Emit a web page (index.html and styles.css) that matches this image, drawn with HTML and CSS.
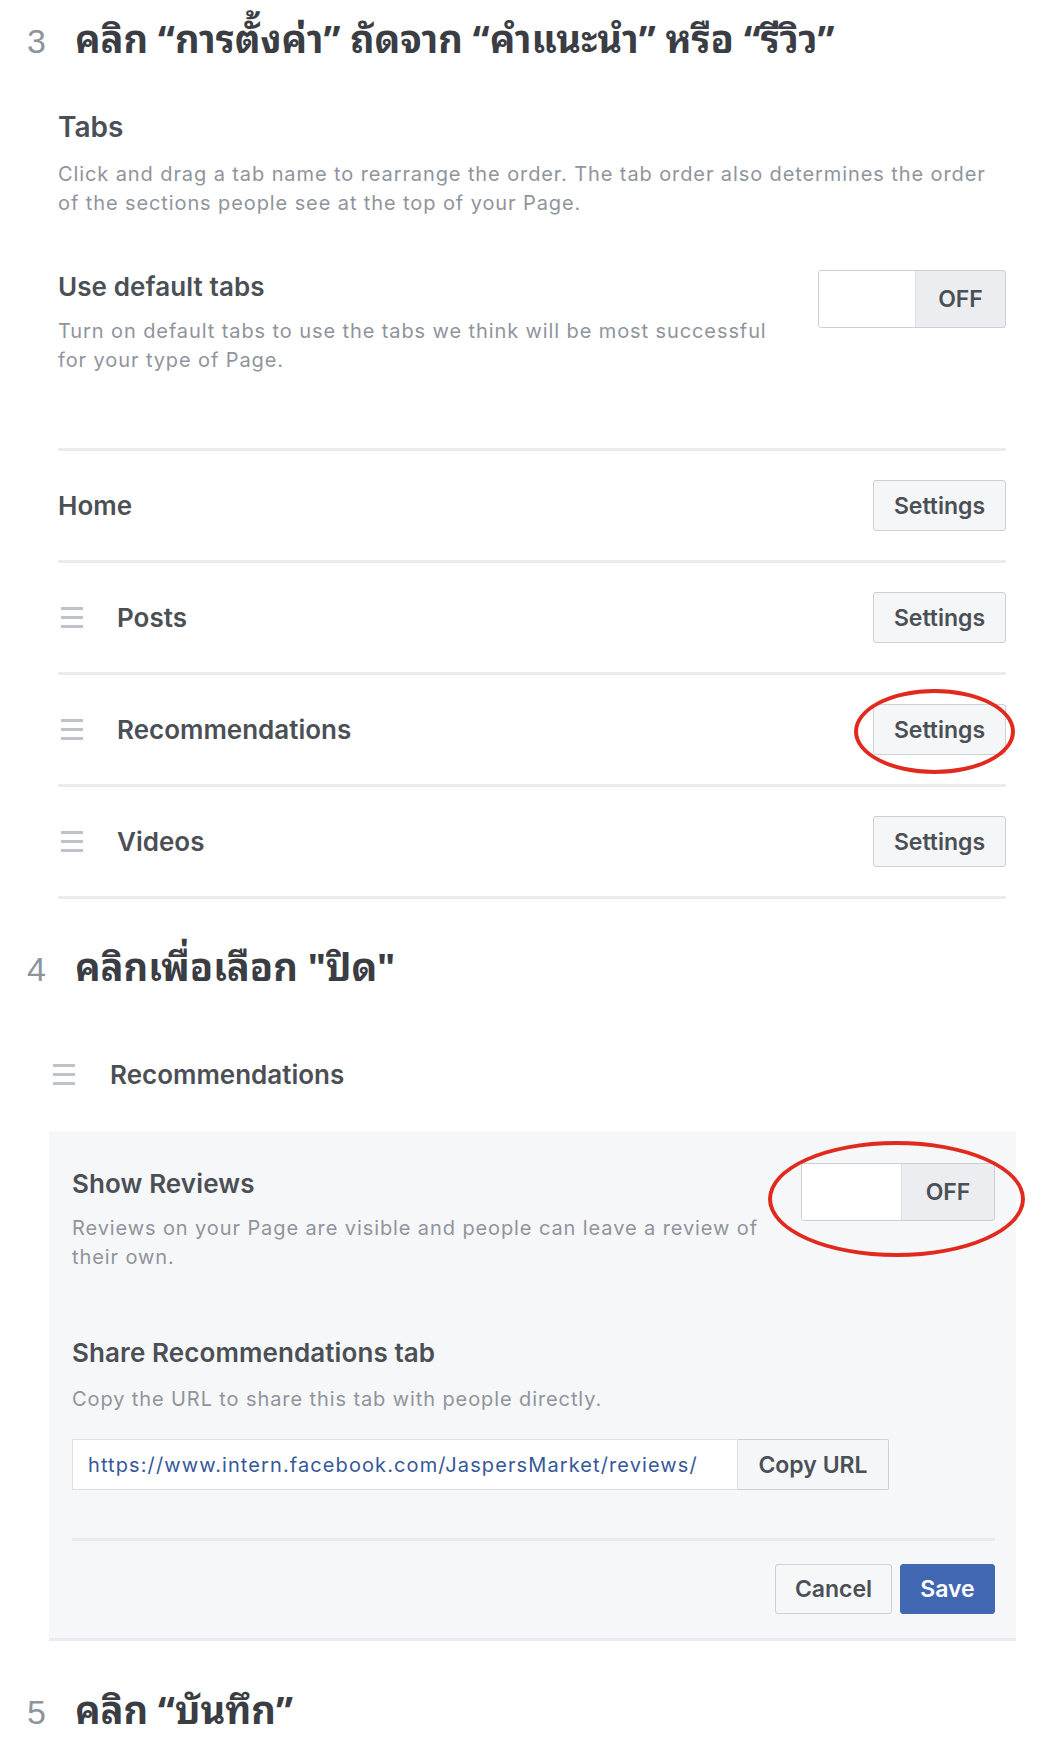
FILE: index.html
```html
<!DOCTYPE html>
<html lang="th">
<head>
<meta charset="utf-8">
<title>Recommendations settings</title>
<link rel="stylesheet" href="styles.css">
</head>
<body>
<main class="page">
  <h2 class="step step-first"><span class="step-num">3</span><span class="step-text">คลิก “การตั้งค่า” ถัดจาก “คำแนะนำ” หรือ “รีวิว”</span></h2>

  <section class="tabs">
    <h3 class="tabs-title">Tabs</h3>
    <p class="desc">Click and drag a tab name to rearrange the order. The tab order also determines the order of the sections people see at the top of your Page.</p>

    <div class="setting">
      <div class="setting-text">
        <h4 class="label">Use default tabs</h4>
        <p class="desc">Turn on default tabs to use the tabs we think will be most successful for your type of Page.</p>
      </div>
      <div class="toggle toggle-tabs"><span class="toggle-knob"></span><span class="toggle-off">OFF</span></div>
    </div>

    <ul class="tab-list">
      <li class="tab-row"><span class="tab-name">Home</span><button class="btn">Settings</button></li>
      <li class="tab-row"><span class="drag"><i></i><i></i><i></i></span><span class="tab-name">Posts</span><button class="btn">Settings</button></li>
      <li class="tab-row"><span class="drag"><i></i><i></i><i></i></span><span class="tab-name">Recommendations</span><span class="mark mark-btn"><button class="btn">Settings</button></span></li>
      <li class="tab-row"><span class="drag"><i></i><i></i><i></i></span><span class="tab-name">Videos</span><button class="btn">Settings</button></li>
    </ul>
  </section>

  <h2 class="step step-second"><span class="step-num">4</span><span class="step-text">คลิกเพื่อเลือก "ปิด"</span></h2>

  <div class="rec-head"><span class="drag"><i></i><i></i><i></i></span><span class="tab-name">Recommendations</span></div>

  <section class="panel">
    <div class="setting panel-setting">
      <div class="setting-text">
        <h4 class="label">Show Reviews</h4>
        <p class="desc">Reviews on your Page are visible and people can leave a review of their own.</p>
      </div>
      <span class="mark mark-toggle"><span class="toggle toggle-reviews"><span class="toggle-knob"></span><span class="toggle-off">OFF</span></span></span>
    </div>

    <h4 class="label share-label">Share Recommendations tab</h4>
    <p class="desc">Copy the URL to share this tab with people directly.</p>
    <div class="url-group">
      <span class="url-field">https://www.intern.facebook.com/JaspersMarket/reviews/</span>
      <button class="btn btn-copy">Copy URL</button>
    </div>

    <div class="panel-footer">
      <button class="btn btn-cancel">Cancel</button>
      <button class="btn btn-save">Save</button>
    </div>
  </section>

  <h2 class="step step-third"><span class="step-num">5</span><span class="step-text">คลิก “บันทึก”</span></h2>
</main>
</body>
</html>
```

FILE: styles.css
```css
html, body {
  margin: 0;
  padding: 0;
  background: #ffffff;
}

.page {
  width: 1062px;
  font-family: Inter, "Liberation Sans", Arial, sans-serif;
  color: #4b4f56;
}

/* Step headings */
.step {
  display: flex;
  align-items: baseline;
  margin: 0;
  padding-left: 27px;
  font-weight: 700;
  line-height: 48px;
}

.step-num {
  width: 48px;
  font-family: "Liberation Sans", Arial, sans-serif;
  font-weight: 400;
  font-size: 34px;
  color: #8d949e;
}

.step-text {
  font-family: "Noto Sans Thai Looped", "Loma", "Garuda", "Noto Sans Thai", "Noto Sans Thai UI", sans-serif;
  font-size: 38px;
  color: #3a3d43;
}

.step-first { padding-top: 12px; }
.step-second { margin-top: 41px; }
.step-third { margin-top: 42px; }

/* Tabs settings block */
.tabs {
  margin-left: 58px;
  width: 948px;
}

.tabs-title {
  margin: 46px 0 0;
  font-size: 28px;
  line-height: 32px;
  font-weight: 600;
  color: #4b4f56;
}

.desc {
  margin: 0;
  font-size: 20px;
  line-height: 29px;
  letter-spacing: 0.9px;
  color: #90949c;
}

.tabs-title + .desc { margin-top: 17px; }

.setting {
  display: flex;
  justify-content: space-between;
  align-items: flex-start;
  margin-top: 54px;
}

.setting-text { width: 712px; }

.label {
  margin: 0 0 15px;
  font-size: 26px;
  line-height: 30px;
  letter-spacing: 0.1px;
  font-weight: 600;
  color: #4b4f56;
}

.toggle {
  display: flex;
  width: 188px;
  height: 58px;
  box-sizing: border-box;
  border: 1px solid #ccd0d5;
  border-radius: 3px;
  overflow: hidden;
  background: #ebedf0;
}

.toggle-tabs { margin-top: -2px; }

.toggle-knob {
  width: 96px;
  background: #ffffff;
  border-right: 1px solid #dddfe2;
}

.toggle-off {
  flex: 1;
  display: flex;
  align-items: center;
  justify-content: center;
  font-size: 23px;
  font-weight: 600;
  color: #4b4f56;
}

/* Tab list */
.tab-list {
  list-style: none;
  margin: 73px 0 0;
  padding: 0;
  border-top: 3px solid #e9ebee;
}

.tab-row {
  display: flex;
  align-items: center;
  height: 109px;
  border-bottom: 3px solid #e9ebee;
}

.tab-name {
  flex: 1;
  font-size: 26px;
  font-weight: 600;
  color: #4b4f56;
}

.drag {
  display: flex;
  flex-direction: column;
  justify-content: space-between;
  width: 22px;
  height: 21px;
  margin: 0 34px 0 3px;
}

.drag i {
  display: block;
  height: 3px;
  background: #bec3c9;
}

.btn {
  box-sizing: border-box;
  height: 51px;
  padding: 0;
  border: 1px solid #ced0d4;
  border-radius: 3px;
  background: #f5f6f7;
  font-family: Inter, "Liberation Sans", Arial, sans-serif;
  font-size: 23px;
  font-weight: 600;
  color: #4b4f56;
}

.tab-row .btn { width: 133px; }

/* Red annotation rings */
.mark {
  position: relative;
  display: inline-block;
}

.mark::after {
  content: "";
  position: absolute;
  border: 4px solid #e2291d;
  border-radius: 50%;
  pointer-events: none;
}

.mark-btn::after {
  left: -19px;
  top: -15px;
  width: 153px;
  height: 77px;
}

.mark-toggle::after {
  left: -33px;
  top: -28px;
  width: 249px;
  height: 108px;
}

/* Recommendations detail */
.rec-head {
  display: flex;
  align-items: center;
  margin: 66px 0 0 50px;
  height: 30px;
}

.rec-head .drag { margin-right: 35px; }

.panel {
  margin: 42px 0 0 49px;
  width: 967px;
  box-sizing: border-box;
  padding: 38px 21px 24px 23px;
  background: #f6f7f9;
  border-bottom: 3px solid #e9ebee;
}

.panel-setting { margin-top: 0; }

.panel-setting .setting-text { width: 700px; }

.toggle-reviews { width: 194px; margin-top: -6px; }
.toggle-reviews .toggle-knob { width: 99px; }

.share-label { margin-top: 66px; margin-bottom: 17px; }

.url-group {
  display: flex;
  margin-top: 25px;
}

.url-field {
  box-sizing: border-box;
  width: 666px;
  height: 51px;
  display: flex;
  align-items: center;
  padding-left: 15px;
  background: #ffffff;
  border: 1px solid #dddfe2;
  font-size: 20px;
  letter-spacing: 1.1px;
  color: #365899;
}

.btn-copy {
  height: 51px;
  width: 151px;
  border-radius: 0 2px 2px 0;
  border-left: none;
}

.panel-footer {
  display: flex;
  justify-content: flex-end;
  gap: 8px;
  margin-top: 48px;
  padding-top: 23px;
  border-top: 3px solid #e9ebee;
}

.btn-cancel {
  width: 117px;
  height: 50px;
  background: #f6f7f9;
}

.btn-save {
  width: 95px;
  height: 50px;
  background: #4267b2;
  border-color: #4267b2;
  color: #ffffff;
}
```
